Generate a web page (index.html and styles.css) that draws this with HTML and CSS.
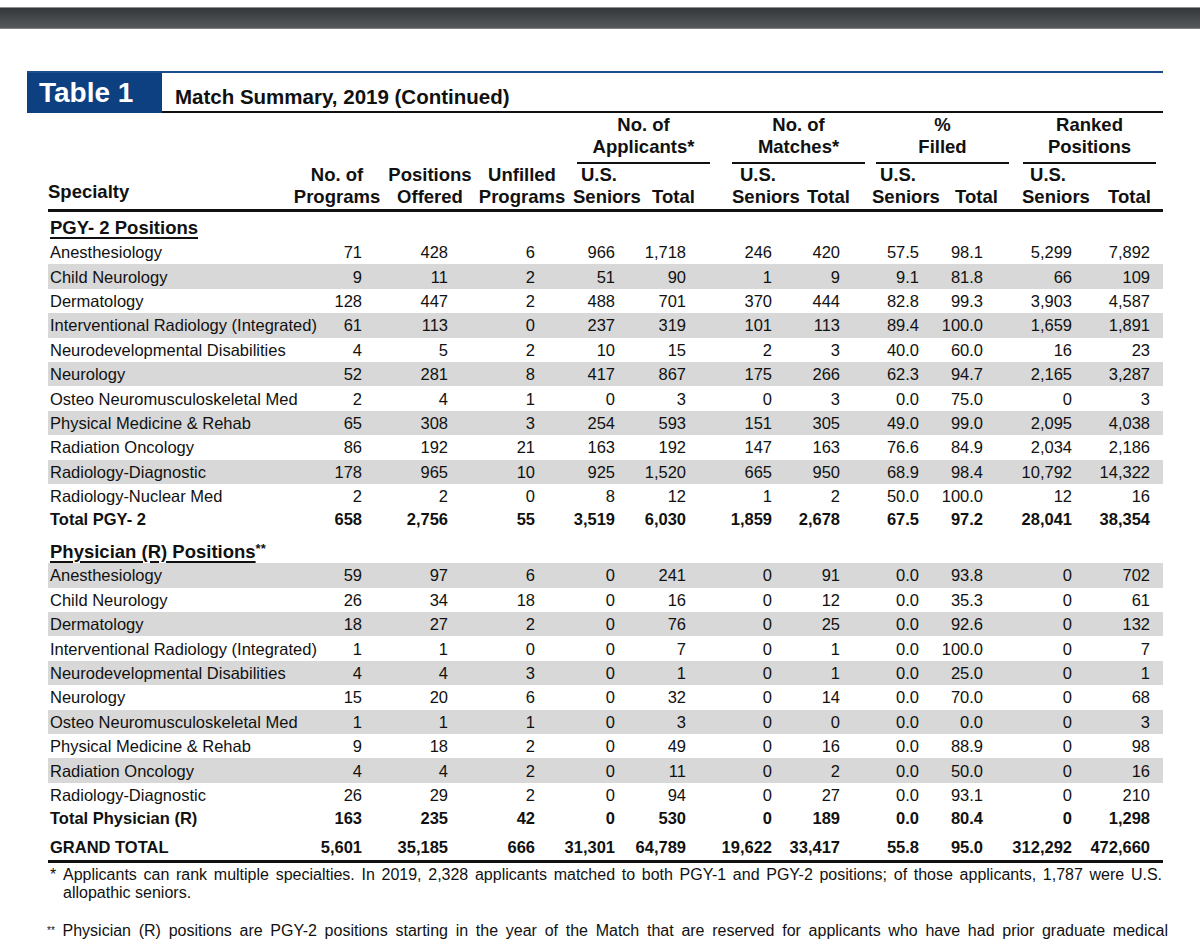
FILE: index.html
```html
<!DOCTYPE html>
<html lang="en">
<head>
<meta charset="utf-8">
<title>Match Summary, 2019 (Continued)</title>
<link rel="stylesheet" href="styles.css">
</head>
<body>
<div class="topbar"></div>
<div class="sheet">
  <div class="titlebar">
    <div class="tag">Table 1</div>
    <div class="title">Match Summary, 2019 (Continued)</div>
  </div>
  <table class="summary">
    <colgroup>
      <col class="c-spec"><col class="c-prog"><col class="c-off"><col class="c-unf">
      <col class="c-aus"><col class="c-atot"><col class="c-mus"><col class="c-mtot">
      <col class="c-fus"><col class="c-ftot"><col class="c-rus"><col class="c-rtot">
    </colgroup>
    <thead>
      <tr class="grp">
        <th colspan="4"></th>
        <th colspan="2"><div class="gl gl-app">No. of<br>Applicants*</div></th>
        <th colspan="2"><div class="gl gl-mat">No. of<br>Matches*</div></th>
        <th colspan="2"><div class="gl gl-fil">%<br>Filled</div></th>
        <th colspan="2"><div class="gl gl-ran">Ranked<br>Positions</div></th>
      </tr>
      <tr class="sub">
        <th class="h-spec">Specialty</th>
        <th class="h-prog">No. of<br>Programs</th>
        <th class="h-off">Positions<br>Offered</th>
        <th class="h-unf">Unfilled<br>Programs</th>
        <th class="h-us h-aus"><span class="us">U.S.</span><br>Seniors</th>
        <th class="h-tot h-atot"><br>Total</th>
        <th class="h-us h-mus"><span class="us">U.S.</span><br>Seniors</th>
        <th class="h-tot h-mtot"><br>Total</th>
        <th class="h-us h-fus"><span class="us">U.S.</span><br>Seniors</th>
        <th class="h-tot h-ftot"><br>Total</th>
        <th class="h-us h-rus"><span class="us">U.S.</span><br>Seniors</th>
        <th class="h-tot h-rtot"><br>Total</th>
      </tr>
    </thead>
    <tbody>
      <tr class="section first"><td colspan="12"><span class="sect">PGY- 2 Positions</span></td></tr>
      <tr class="row"><td>Anesthesiology</td><td>71</td><td>428</td><td>6</td><td>966</td><td>1,718</td><td>246</td><td>420</td><td>57.5</td><td>98.1</td><td>5,299</td><td>7,892</td></tr>
      <tr class="row alt"><td>Child Neurology</td><td>9</td><td>11</td><td>2</td><td>51</td><td>90</td><td>1</td><td>9</td><td>9.1</td><td>81.8</td><td>66</td><td>109</td></tr>
      <tr class="row"><td>Dermatology</td><td>128</td><td>447</td><td>2</td><td>488</td><td>701</td><td>370</td><td>444</td><td>82.8</td><td>99.3</td><td>3,903</td><td>4,587</td></tr>
      <tr class="row alt"><td>Interventional Radiology (Integrated)</td><td>61</td><td>113</td><td>0</td><td>237</td><td>319</td><td>101</td><td>113</td><td>89.4</td><td>100.0</td><td>1,659</td><td>1,891</td></tr>
      <tr class="row"><td>Neurodevelopmental Disabilities</td><td>4</td><td>5</td><td>2</td><td>10</td><td>15</td><td>2</td><td>3</td><td>40.0</td><td>60.0</td><td>16</td><td>23</td></tr>
      <tr class="row alt"><td>Neurology</td><td>52</td><td>281</td><td>8</td><td>417</td><td>867</td><td>175</td><td>266</td><td>62.3</td><td>94.7</td><td>2,165</td><td>3,287</td></tr>
      <tr class="row"><td>Osteo Neuromusculoskeletal Med</td><td>2</td><td>4</td><td>1</td><td>0</td><td>3</td><td>0</td><td>3</td><td>0.0</td><td>75.0</td><td>0</td><td>3</td></tr>
      <tr class="row alt"><td>Physical Medicine &amp; Rehab</td><td>65</td><td>308</td><td>3</td><td>254</td><td>593</td><td>151</td><td>305</td><td>49.0</td><td>99.0</td><td>2,095</td><td>4,038</td></tr>
      <tr class="row"><td>Radiation Oncology</td><td>86</td><td>192</td><td>21</td><td>163</td><td>192</td><td>147</td><td>163</td><td>76.6</td><td>84.9</td><td>2,034</td><td>2,186</td></tr>
      <tr class="row alt"><td>Radiology-Diagnostic</td><td>178</td><td>965</td><td>10</td><td>925</td><td>1,520</td><td>665</td><td>950</td><td>68.9</td><td>98.4</td><td>10,792</td><td>14,322</td></tr>
      <tr class="row"><td>Radiology-Nuclear Med</td><td>2</td><td>2</td><td>0</td><td>8</td><td>12</td><td>1</td><td>2</td><td>50.0</td><td>100.0</td><td>12</td><td>16</td></tr>
      <tr class="total"><td>Total PGY- 2</td><td>658</td><td>2,756</td><td>55</td><td>3,519</td><td>6,030</td><td>1,859</td><td>2,678</td><td>67.5</td><td>97.2</td><td>28,041</td><td>38,354</td></tr>

      <tr class="section second"><td colspan="12"><span class="sect">Physician (R) Positions</span><span class="stars">**</span></td></tr>
      <tr class="row alt"><td>Anesthesiology</td><td>59</td><td>97</td><td>6</td><td>0</td><td>241</td><td>0</td><td>91</td><td>0.0</td><td>93.8</td><td>0</td><td>702</td></tr>
      <tr class="row"><td>Child Neurology</td><td>26</td><td>34</td><td>18</td><td>0</td><td>16</td><td>0</td><td>12</td><td>0.0</td><td>35.3</td><td>0</td><td>61</td></tr>
      <tr class="row alt"><td>Dermatology</td><td>18</td><td>27</td><td>2</td><td>0</td><td>76</td><td>0</td><td>25</td><td>0.0</td><td>92.6</td><td>0</td><td>132</td></tr>
      <tr class="row"><td>Interventional Radiology (Integrated)</td><td>1</td><td>1</td><td>0</td><td>0</td><td>7</td><td>0</td><td>1</td><td>0.0</td><td>100.0</td><td>0</td><td>7</td></tr>
      <tr class="row alt"><td>Neurodevelopmental Disabilities</td><td>4</td><td>4</td><td>3</td><td>0</td><td>1</td><td>0</td><td>1</td><td>0.0</td><td>25.0</td><td>0</td><td>1</td></tr>
      <tr class="row"><td>Neurology</td><td>15</td><td>20</td><td>6</td><td>0</td><td>32</td><td>0</td><td>14</td><td>0.0</td><td>70.0</td><td>0</td><td>68</td></tr>
      <tr class="row alt"><td>Osteo Neuromusculoskeletal Med</td><td>1</td><td>1</td><td>1</td><td>0</td><td>3</td><td>0</td><td>0</td><td>0.0</td><td>0.0</td><td>0</td><td>3</td></tr>
      <tr class="row"><td>Physical Medicine &amp; Rehab</td><td>9</td><td>18</td><td>2</td><td>0</td><td>49</td><td>0</td><td>16</td><td>0.0</td><td>88.9</td><td>0</td><td>98</td></tr>
      <tr class="row alt"><td>Radiation Oncology</td><td>4</td><td>4</td><td>2</td><td>0</td><td>11</td><td>0</td><td>2</td><td>0.0</td><td>50.0</td><td>0</td><td>16</td></tr>
      <tr class="row"><td>Radiology-Diagnostic</td><td>26</td><td>29</td><td>2</td><td>0</td><td>94</td><td>0</td><td>27</td><td>0.0</td><td>93.1</td><td>0</td><td>210</td></tr>
      <tr class="total"><td>Total Physician (R)</td><td>163</td><td>235</td><td>42</td><td>0</td><td>530</td><td>0</td><td>189</td><td>0.0</td><td>80.4</td><td>0</td><td>1,298</td></tr>
      <tr class="grand"><td>GRAND TOTAL</td><td>5,601</td><td>35,185</td><td>666</td><td>31,301</td><td>64,789</td><td>19,622</td><td>33,417</td><td>55.8</td><td>95.0</td><td>312,292</td><td>472,660</td></tr>
    </tbody>
  </table>
  <div class="notes">
    <p class="note note1"><span class="mark">*</span>Applicants can rank multiple specialties. In 2019, 2,328 applicants matched to both PGY-1 and PGY-2 positions; of those applicants, 1,787 were U.S. allopathic seniors.</p>
    <p class="note note2"><span class="mark2">**</span> Physician (R) positions are PGY-2 positions starting in the year of the Match that are reserved for applicants who have had prior graduate medical</p>
  </div>
</div>
</body>
</html>
```
FILE: styles.css
```css
html, body {
  margin: 0;
  padding: 0;
  background: #ffffff;
}

body {
  font-family: "Liberation Sans", Arial, sans-serif;
  color: #111111;
}

.topbar {
  margin-top: 7px;
  height: 20px;
  border-top: 1px solid #8d9092;
  border-bottom: 1px solid #7e8184;
  background: linear-gradient(#34373a, #56595c);
}

.sheet {
  margin-left: 27px;
  width: 1136px;
}

/* ---------- title bar ---------- */
.titlebar {
  margin-top: 42px;
  display: flex;
  border-top: 2px solid #1c4d8b;
}

.tag {
  width: 123px;
  height: 40px;
  padding-left: 12px;
  background: #0c4080;
  color: #ffffff;
  font-weight: bold;
  font-size: 28px;
  line-height: 40px;
}

.title {
  flex: 1;
  display: flex;
  align-items: flex-end;
  padding-left: 13px;
  padding-bottom: 2px;
  border-bottom: 2px solid #111111;
  font-weight: bold;
  font-size: 20.5px;
  line-height: 24px;
}

/* ---------- table ---------- */
.summary {
  margin-left: 21px;
  width: 1115px;
  table-layout: fixed;
  border-collapse: collapse;
  font-size: 16.5px;
}

.c-spec { width: 242px; }
.c-prog { width: 94px; }
.c-off  { width: 92px; }
.c-unf  { width: 92px; }
.c-aus  { width: 77px; }
.c-atot { width: 70px; }
.c-mus  { width: 88px; }
.c-mtot { width: 67px; }
.c-fus  { width: 82px; }
.c-ftot { width: 64px; }
.c-rus  { width: 84px; }
.c-rtot { width: 63px; }

.summary th,
.summary td {
  padding: 0;
  white-space: nowrap;
}

.summary th {
  font-weight: bold;
  font-size: 18.5px;
  line-height: 22px;
}

/* group header row */
.grp th {
  vertical-align: top;
  text-align: center;
  padding-top: 1px;
}

.gl {
  padding-bottom: 4px;
  border-bottom: 2px solid #111111;
}

.gl-app { margin: 0 5px 0 9px; }
.gl-mat { margin: 0 5px 0 17px; }
.gl-fil { margin: 0 7px 0 6px; }
.gl-ran { margin: 0 7px 0 7px; }

/* sub header row */
.sub th {
  vertical-align: bottom;
  padding-bottom: 1px;
  border-bottom: 3px solid #111111;
}

.summary .h-spec { text-align: left; padding-bottom: 6px; }
.h-prog { text-align: center; }
.h-off  { text-align: center; }
.h-unf  { text-align: center; }
.h-us   { text-align: left; }
.h-tot  { text-align: left; }
.us { padding-left: 8px; }

.summary .h-aus  { padding-left: 5px; }
.summary .h-atot { padding-left: 7px; }
.summary .h-mus  { padding-left: 17px; }
.summary .h-mtot { padding-left: 4px; }
.summary .h-fus  { padding-left: 2px; }
.summary .h-ftot { padding-left: 3px; }
.summary .h-rus  { padding-left: 6px; }
.summary .h-rtot { padding-left: 8px; }

/* section headings */
.section td {
  text-align: left;
  vertical-align: bottom;
}

.section.first td { height: 27px; padding-bottom: 1px; }
.section.second td { height: 33px; }

.sect {
  font-weight: bold;
  font-size: 18.5px;
  line-height: 22px;
  text-decoration: underline;
  text-decoration-thickness: 2px;
  text-underline-offset: 3px;
}

.stars {
  font-weight: bold;
  font-size: 13px;
  vertical-align: 5px;
}

/* data rows */
.row td,
.total td,
.grand td {
  text-align: right;
  line-height: 20px;
}

/* numbers overflow leftwards if wider than the cell */
.summary tbody td:nth-child(n+2) {
  direction: rtl;
  text-align: right;
}

.row td { height: 24.4px; }

.row.alt td { background: #d8d8d8; }

.summary tbody td:first-child {
  text-align: left;
  padding-left: 2px;
}

.total td {
  height: 22px;
  font-weight: bold;
}

.grand td {
  height: 28px;
  vertical-align: bottom;
  padding-bottom: 3px;
  font-weight: bold;
  border-bottom: 3px solid #111111;
}

.summary tbody td:nth-child(2)  { padding-right: 22px; }
.summary tbody td:nth-child(3)  { padding-right: 28px; }
.summary tbody td:nth-child(4)  { padding-right: 33px; }
.summary tbody td:nth-child(5)  { padding-right: 30px; }
.summary tbody td:nth-child(6)  { padding-right: 29px; }
.summary tbody td:nth-child(7)  { padding-right: 31px; }
.summary tbody td:nth-child(8)  { padding-right: 30px; }
.summary tbody td:nth-child(9)  { padding-right: 33px; }
.summary tbody td:nth-child(10) { padding-right: 33px; }
.summary tbody td:nth-child(11) { padding-right: 28px; }
.summary tbody td:nth-child(12) { padding-right: 13px; }

/* ---------- notes ---------- */
.notes {
  margin-left: 23px;
  width: 1112px;
  font-size: 16px;
  line-height: 18px;
}

.note {
  margin: 0;
  text-align: justify;
}

.note1 {
  margin-top: 3px;
  padding-left: 13px;
  text-indent: -13px;
}

.mark {
  display: inline-block;
  width: 13px;
  text-indent: 0;
}

.note2 {
  margin-top: 20px;
  margin-left: -3px;
  width: 1121px;
  text-align-last: justify;
}

.mark2 {
  font-size: 10px;
  vertical-align: 2px;
}
```
